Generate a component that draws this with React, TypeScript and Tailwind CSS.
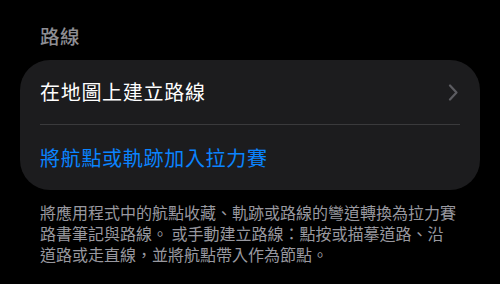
import React from "react";

const font = { fontFamily: '"Noto Sans CJK TC", "Noto Sans", sans-serif' };

function Chevron() {
  return (
    <svg width="10" height="17" viewBox="0 0 10 17" fill="none" className="shrink-0">
      <polyline
        points="2,1.5 8.5,8.5 2,15.5"
        stroke="#5c5c61"
        strokeWidth="2.2"
        strokeLinecap="round"
        strokeLinejoin="round"
      />
    </svg>
  );
}

export default function App() {
  return (
    <div className="w-[500px] h-[284px] overflow-hidden bg-black" style={font}>
      {/* Section header */}
      <div className="h-[60px] px-10 pt-[21px] text-[19.5px] leading-[30px] tracking-[0.5px] font-medium text-[#8e8e93]">
        路線
      </div>

      {/* Grouped card */}
      <div className="mx-5 rounded-[30px] bg-[#1c1c1e]">
        <div className="flex h-[64px] items-center justify-between pl-5 pr-[22px]">
          <span className="text-[20px] leading-none tracking-[0.7px] text-white">在地圖上建立路線</span>
          <Chevron />
        </div>
        <div className="mx-5 h-px bg-[#3a3a3c]" />
        <div className="flex h-[65px] items-center pl-5">
          <span className="text-[20px] leading-none tracking-[0.7px] text-[#0a84ff]">將航點或軌跡加入拉力賽</span>
        </div>
      </div>

      {/* Footer description */}
      <div className="px-10 pt-[12px] whitespace-nowrap text-[16px] leading-[21px] tracking-[0px] text-[#98989f]">
        <div>將應用程式中的航點收藏、軌跡或路線的彎道轉換為拉力賽</div>
        <div>路書筆記與路線。 或手動建立路線：點按或描摹道路、沿</div>
        <div>道路或走直線，並將航點帶入作為節點。</div>
      </div>

      {/* Next section header (cut off) */}
      <div className="px-10 pt-[18px] text-[19.5px] leading-[30px] tracking-[0.5px] font-medium text-[#8e8e93]">
        路書範例
      </div>
    </div>
  );
}
